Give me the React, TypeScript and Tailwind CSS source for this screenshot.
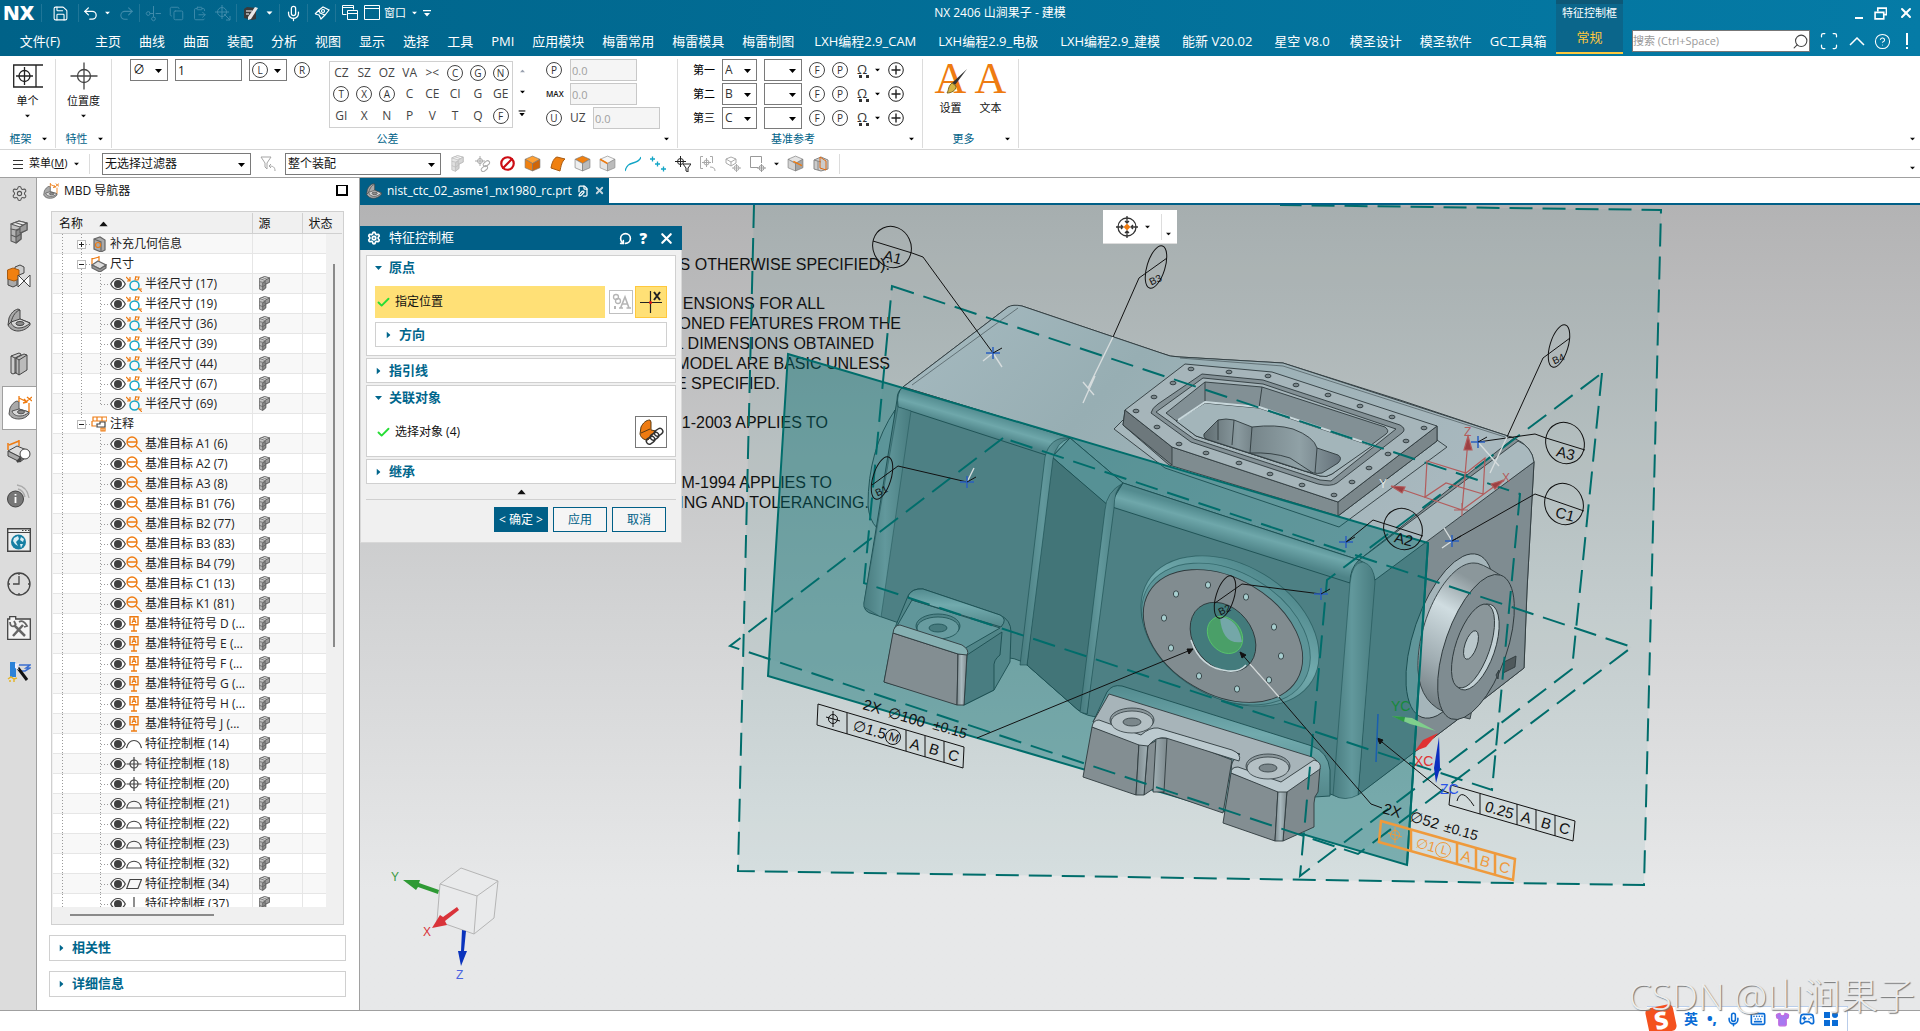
import React from "react";
import {
    Mic,
    Scissors,
    Undo2,
    Redo2,
    Save,
    Copy,
    ClipboardPaste,
    Search,
    HelpCircle,
    ChevronUp,
    X,
    Check,
    Settings,
    RotateCcw,
    FilePen,
    Ban,
    Scan,
    Keyboard,
    Gamepad2,
    Shirt,
} from "lucide-react";

const TABS = [
    "主页", "曲线", "曲面", "装配", "分析", "视图", "显示", "选择", "工具", "PMI",
    "应用模块", "梅雷常用", "梅雷模具", "梅雷制图", "LXH编程2.9_CAM", "LXH编程2.9_电极",
    "LXH编程2.9_建模", "能新 V20.02", "星空 V8.0", "模圣设计", "模圣软件", "GC工具箱",
];

const SYMBOLS = [
    "CZ", "SZ", "OZ", "VA", "><", "(C)", "(G)", "(N)",
    "(T)", "(X)", "(A)", "C", "CE", "CI", "G", "GE",
    "GI", "X", "N", "P", "V", "T", "Q", "(F)",
];

type NodeKind = "extra" | "dims" | "notes" | "radius" | "target" | "datum" | "arc" | "position" | "profile" | "flat" | "line";

type TreeNode = {
    label: string;
    kind: NodeKind;
    group?: "open" | "closed";
    last?: boolean;
    under?: "dims" | "notes";
};

const child = (kind: NodeKind, label: string, under: "dims" | "notes" = "notes"): TreeNode => ({ kind, label, under });

const TREE: TreeNode[] = [
    { label: "补充几何信息", kind: "extra", group: "closed" },
    { label: "尺寸", kind: "dims", group: "open" },
    ...[17, 19, 36, 39, 44, 67].map((n) => child("radius", `半径尺寸 (${n})`, "dims")),
    { label: "半径尺寸 (69)", kind: "radius", under: "dims", last: true },
    { label: "注释", kind: "notes", group: "open" },
    ...["A1 (6)", "A2 (7)", "A3 (8)", "B1 (76)", "B2 (77)", "B3 (83)", "B4 (79)", "C1 (13)", "K1 (81)"].map((n) =>
        child("target", `基准目标 ${n}`)
    ),
    ...["D", "E", "F", "G", "H", "J"].map((n) => child("datum", `基准特征符号 ${n} (...`)),
    child("arc", "特征控制框 (14)"),
    child("position", "特征控制框 (18)"),
    child("position", "特征控制框 (20)"),
    ...[21, 22, 23, 32].map((n) => child("profile", `特征控制框 (${n})`)),
    child("flat", "特征控制框 (34)"),
    child("line", "特征控制框 (37)"),
];

function Caret({ className = "" }: { className?: string }) {
    return (
        <svg viewBox="0 0 7 4" className={`w-[7px] h-[4px] shrink-0 ${className}`} fill="currentColor">
            <path d="M0 0h7L3.5 4z" />
        </svg>
    );
}

function BarCaret({ className = "" }: { className?: string }) {
    return (
        <svg viewBox="0 0 8 7" className={`w-[8px] h-[7px] shrink-0 ${className}`} fill="currentColor">
            <path d="M0 0h8v1.200H0zM1 3h6L4 6.500z" />
        </svg>
    );
}

function Combo({ label, value, className }: { label: string; value: string; className: string }) {
    return (
        <div className={`relative h-[22px] border border-[#7a7a7a] bg-white ${className}`}>
            <select aria-label={label} className="appearance-none w-full h-full px-[2px] text-[12px] leading-[20px] bg-transparent outline-none">
                <option>{value}</option>
            </select>
            <Caret className="absolute right-[5px] top-[9px] pointer-events-none text-black" />
        </div>
    );
}

function Circled({ children }: { children: React.ReactNode }) {
    return (
        <span className="inline-flex items-center justify-center w-[16px] h-[16px] rounded-full border border-[#444] text-[10px] leading-none text-[#333]">
            {children}
        </span>
    );
}

function PartIcon({ className = "w-[24px] h-[24px]" }: { className?: string }) {
    return (
        <svg viewBox="0 0 24 24" className={className} stroke="#5a5a5a" strokeWidth="1.100" strokeLinejoin="round">
            <path d="M4 9l5-3 5 2v11l-5 4-5-2z" fill="#b4b4b4" />
            <path d="M9 11l5-3v11l-5 4z" fill="#8c8c8c" />
            <path d="M4 15l5 2 5-3" fill="none" />
            <path d="M4 4l8-3 8 2v7l-6 3V8L9 10 4 9z" fill="#c4c4c4" />
            <path d="M4 4l8-3 8 2-7 4z" fill="#ececec" />
            <path d="M13 7l7-4v7l-7 3z" fill="#9c9c9c" />
            <path d="M8 2.500l8 2.500" fill="none" />
        </svg>
    );
}

function Bracket({ color = "#a9a9a9", className = "w-[24px] h-[24px]" }: { color?: string; className?: string }) {
    return (
        <svg viewBox="0 0 24 24" className={className} stroke="#444" strokeWidth="1" strokeLinejoin="round">
            <path d="M1 17L2 10C4 5 7 2 11 1l2 1v9l10 4v2c-2 3-7 6-12 6-4 0-8-2-10-6z" fill={color} />
            <path d="M13 2C9 3 6 7 4 14l-3 3" fill="none" />
            <path d="M4 14l9-3 10 4c-3 3-7 5-11 5s-7-2-8-6z" fill="#d6d6d6" />
            <ellipse cx="13" cy="15.500" rx="4" ry="2" fill="#8c8c8c" />
        </svg>
    );
}

function MbdIcon({ className = "w-[24px] h-[24px]" }: { className?: string }) {
    return (
        <svg viewBox="0 0 24 24" className={className} stroke="#555" strokeWidth="1" strokeLinejoin="round">
            <path d="M1 18l1-6c2-4 4-6 7-7l2 1v7l10 3v2c-2 3-6 5-10 5s-8-1-10-5z" fill="#a9a9a9" />
            <path d="M4 15l7-2 10 3c-3 3-6 4-9 4s-7-1-8-5z" fill="#dadada" />
            <ellipse cx="13" cy="16" rx="3.500" ry="1.800" fill="#888" />
            <path d="M11 0v6M11 2l8 4M16 3l3 3-4 1M21 7v9M19 1l5 4M24 1l-5 4" stroke="#ee7b11" strokeWidth="1.300" fill="none" />
        </svg>
    );
}

function Cube({ top, left, right, slash }: { top: string; left: string; right: string; slash?: boolean }) {
    return (
        <svg viewBox="0 0 16 16" className="w-[17px] h-[17px]" stroke="#777" strokeWidth="0.600" strokeLinejoin="round">
            <path d="M8 1l7 3-7 4-7-4z" fill={top} />
            <path d="M1 4l7 4v7l-7-3z" fill={left} />
            <path d="M15 4L8 8v7l7-3z" fill={right} />
            {slash && <path d="M6 6l8 4" stroke="#ee7b11" strokeWidth="1.500" />}
        </svg>
    );
}

function PositionIcon({ className, stroke = "#444" }: { className: string; stroke?: string }) {
    return (
        <svg viewBox="0 0 28 28" className={className} fill="none" stroke={stroke} strokeWidth="1.300">
            <circle cx="14" cy="14" r="6.500" />
            <path d="M0.500 14h27M14 0.500v27" />
        </svg>
    );
}

function NodeIcon({ kind }: { kind: NodeKind }) {
    const o = "#ee7b11";
    return (
        <svg viewBox="0 0 16 16" className="w-[16px] h-[16px] shrink-0" fill="none" stroke="#444" strokeWidth="1.200">
            {kind === "extra" && (
                <>
                    <path d="M3 3l6-2 5 3v10l-4 2-7-3z" fill="#aaa" stroke="#666" />
                    <path d="M3 3l7 3v10" stroke="#666" />
                    <circle cx="7" cy="9" r="2.500" stroke={o} />
                </>
            )}
            {kind === "dims" && (
                <>
                    <path d="M1 9l6-4 8 4-6 4z" fill="#ddd" stroke="#666" />
                    <path d="M1 9v3l8 4 6-4V9l-6 4z" fill="#999" stroke="#666" />
                    <path d="M1 8V2M8 5V0M1 3l7-2" stroke={o} />
                </>
            )}
            {kind === "notes" && (
                <>
                    <path d="M2 1h14v4H2zM6 1v4M11 1v4M1 5v5h4M10 12h4v3h-4zM12 12v3" stroke={o} />
                    <path d="M6 11V8h3V6h5v5z" />
                </>
            )}
            {kind === "radius" && (
                <>
                    <circle cx="8.500" cy="9.500" r="4.500" stroke="#12a5c6" strokeWidth="1.500" />
                    <path d="M0 1l4 4M4 1v4H1M9 4l1-4M10 1h3l-1 3H9M12 12l4 4M13 13h3" stroke={o} />
                </>
            )}
            {kind === "target" && (
                <path d="M1 6a5 5 0 1 0 10 0a5 5 0 1 0-10 0zM1 6h10M9.500 9.500L16 16" stroke={o} strokeWidth="1.400" />
            )}
            {kind === "datum" && (
                <>
                    <path d="M4 0.700h8v8H4zM8 9v6M5 15h6" stroke={o} strokeWidth="1.400" />
                    <path d="M6 7l2-5 2 5M7 5.500h2" stroke={o} />
                </>
            )}
            {kind === "arc" && <path d="M0.500 12C3 2 13 2 15.500 12" />}
            {kind === "position" && (
                <>
                    <circle cx="8" cy="8" r="4" />
                    <path d="M0.500 8h15M8 1v14" />
                </>
            )}
            {kind === "profile" && <path d="M0.700 12C2 3 14 3 15.300 12z" />}
            {kind === "flat" && <path d="M4 3.500h11.500L12 12.500H0.700z" />}
            {kind === "line" && <path d="M8 1v14" />}
        </svg>
    );
}

function TreeLines({ node }: { node: TreeNode }) {
    const dots = { stroke: "#9a9a9a", strokeDasharray: "1 2", fill: "none" };
    if (node.group) {
        return (
            <svg viewBox="0 0 38 20" className="w-[38px] h-[20px] shrink-0">
                <path d={`M9.500 0v20M28.500 0v6M33 10.500h6${node.kind === "notes" ? "" : "M28.500 15v5"}`} {...dots} />
                <rect x="24.500" y="6.500" width="8" height="8" fill="#fff" stroke="#bbb" />
                <path d={node.group === "closed" ? "M26 10.500h5M28.500 8v5" : "M26 10.500h5"} stroke="#222" />
            </svg>
        );
    }
    return (
        <svg viewBox="0 0 57 20" className="w-[57px] h-[20px] shrink-0">
            <path
                d={`M9.500 0v20M47.500 0v${node.last ? 10 : 20}M48 10.500h9${node.under === "dims" ? "M28.500 0v20" : ""}`}
                {...dots}
            />
        </svg>
    );
}

function Eye() {
    return (
        <svg viewBox="0 0 16 14" className="w-[16px] h-[14px] shrink-0">
            <path d="M0.700 7C3 2.500 5.500 1.500 8 1.500S13 2.500 15.300 7C13 11.500 10.500 12.500 8 12.500S3 11.500 0.700 7z" fill="#fff" stroke="#444" strokeWidth="1.200" />
            <circle cx="8" cy="7" r="4" fill="#3f3f3f" />
        </svg>
    );
}

function BarDivider() {
    return <div className="w-px h-[18px] mx-[2px] bg-[#1f7698]" />;
}

function TitleBar() {
    const slot = "flex w-[23px] shrink-0 justify-center";
    return (
        <header className="flex h-[56px] shrink-0 bg-gradient-to-r from-[#006288] to-[#057ba6] text-white">
            <div className="flex-1 min-w-0">
                <div className="flex h-[26px] items-center">
                    <div className="flex w-[444px] shrink-0 items-center">
                        <span className="w-[39px] pl-[3px] text-[20px] leading-[24px] font-extrabold">NX</span>
                        <BarDivider />
                        <button aria-label="保存" className="flex w-[32px] justify-center"><Save size={17} strokeWidth={1.5} /></button>
                        <BarDivider />
                        <button aria-label="撤销" className="flex w-[18px] justify-center"><Undo2 size={17} strokeWidth={1.8} /></button>
                        <Caret className="mx-[5px] scale-75" />
                        <button aria-label="重做" className="flex w-[21px] justify-center text-[#3f8bab]"><Redo2 size={17} strokeWidth={1.5} /></button>
                        <BarDivider />
                        <button aria-label="剪切" className={`${slot} text-[#3f8bab]`}><Scissors size={15} strokeWidth={1.5} className="-rotate-45" /></button>
                        <button aria-label="复制" className={`${slot} text-[#3f8bab]`}><Copy size={15} strokeWidth={1.5} /></button>
                        <button aria-label="粘贴" className={`${slot} text-[#3f8bab]`}><ClipboardPaste size={15} strokeWidth={1.5} /></button>
                        <button aria-label="移动" className={`${slot} text-[#3f8bab]`}>
                            <svg viewBox="0 0 16 16" className="w-[16px] h-[16px]" fill="none" stroke="currentColor">
                                <circle cx="7" cy="7" r="4.500" />
                                <path d="M0 7h14M7 0v14M9 9l6 6M15 11v4h-4" />
                            </svg>
                        </button>
                        <BarDivider />
                        <button aria-label="重复命令" className={slot}>
                            <svg viewBox="0 0 16 16" className="w-[16px] h-[16px]">
                                <path d="M1 4l3-2 9 1v11L9 15l-8-2z" fill="#3a3a3a" />
                                <path d="M3 6h6M3 9h3" stroke="#fff" />
                                <path d="M15 3L8 14l-3 1v-3L12 2z" fill="#e8e8e8" />
                            </svg>
                        </button>
                        <Caret className="mx-[4px] scale-90" />
                        <BarDivider />
                        <button aria-label="语音" className={slot}><Mic size={17} strokeWidth={1.8} /></button>
                        <BarDivider />
                        <button aria-label="触控" className={slot}>
                            <svg viewBox="0 0 16 14" className="w-[16px] h-[14px]" fill="none" stroke="#fff" strokeWidth="1.200">
                                <path d="M5 4l4-3 6 3-4 5-5-2zM1 8l4 1 2 4 4-4M5 4L1 8" />
                                <circle cx="9" cy="5" r="1.500" />
                            </svg>
                        </button>
                        <BarDivider />
                        <button aria-label="切换窗口" className={slot}>
                            <svg viewBox="0 0 16 16" className="w-[16px] h-[16px]" fill="none" stroke="#fff">
                                <path d="M4.500 9.500h-4v-9h11v4M0.500 2.500h11M5.500 5.500h10v9h-10zM5.500 8.500h10" />
                            </svg>
                        </button>
                        <button className="flex items-center gap-[4px] pl-[3px] text-[11px] whitespace-nowrap">
                            <svg viewBox="0 0 16 16" className="w-[16px] h-[16px]" fill="none" stroke="#fff">
                                <path d="M0.500 0.500h15v14h-15zM0.500 3.500h15" />
                            </svg>
                            窗口
                        </button>
                        <Caret className="ml-[5px] scale-75" />
                        <BarCaret className="ml-[5px]" />
                    </div>
                    <h1 className="flex-1 text-center text-[12px] leading-[20px]">NX 2406 山涧果子 - 建模</h1>
                </div>
                <nav className="flex h-[29px] text-[13px] leading-[28px] whitespace-nowrap">
                    <button className="w-[86px] shrink-0 pr-[6px]">文件(F)</button>
                    {TABS.map((tab) => (
                        <button key={tab} className={`shrink-0 ${/\d/.test(tab) ? "px-[11px]" : "px-[9px]"}`}>{tab}</button>
                    ))}
                </nav>
            </div>
            <div className="w-[67px] h-[54px] shrink-0 bg-[#0b668b] border-t-4 border-t-[#0d5877] border-b-2 border-b-[#ffc83d] text-center">
                <div className="text-[11px] leading-[18px]">特征控制框</div>
                <button className="text-[13px] leading-[30px] text-[#ffc83d]">常规</button>
            </div>
            <div className="w-[297px] shrink-0 pl-[9px] pr-[6px]">
                <div className="flex h-[29px] items-center justify-end gap-[11px] pb-[3px]">
                    <button aria-label="最小化" className="w-[8px] h-[2px] mt-[9px] bg-white" />
                    <button aria-label="还原">
                        <svg viewBox="0 0 12 12" className="w-[13px] h-[13px]" fill="none" stroke="#fff" strokeWidth="1.500">
                            <path d="M3.500 4V1h8v6H9M1 5h8v6H1z" />
                        </svg>
                    </button>
                    <button aria-label="关闭"><X size={16} strokeWidth={3} /></button>
                </div>
                <div className="flex items-center justify-between pt-px">
                    <div className="flex w-[178px] h-[22px] items-center bg-white border border-[#777]">
                        <input aria-label="搜索" placeholder="搜索 (Ctrl+Space)" className="w-full min-w-0 text-[11px] leading-[20px] text-black placeholder:text-[#999] outline-none" />
                        <Search size={17} strokeWidth={1.5} className="shrink-0 -scale-x-100 text-[#444]" />
                    </div>
                    <button aria-label="全屏"><Scan size={20} strokeWidth={1.5} /></button>
                    <button aria-label="最小化功能区">
                        <svg viewBox="0 0 16 9" className="w-[16px] h-[9px]" fill="none" stroke="#fff" strokeWidth="1.500"><path d="M1 8l7-7 7 7" /></svg>
                    </button>
                    <button aria-label="帮助"><HelpCircle size={17} strokeWidth={1.5} /></button>
                    <button aria-label="信息" className="w-[14px]">
                        <svg viewBox="0 0 4 16" className="w-[4px] h-[16px] mx-auto" stroke="#fff" strokeWidth="2">
                            <path d="M2 0v12M2 14v2" />
                        </svg>
                    </button>
                </div>
            </div>
        </header>
    );
}

function GroupLabel({ children, className = "" }: { children: React.ReactNode; className?: string }) {
    return (
        <div className={`flex h-[18px] items-center text-[11px] leading-[18px] text-[#006288] ${className}`}>
            <span className="flex-1 text-center">{children}</span>
            <Caret className="text-black scale-75 mr-[7px]" />
        </div>
    );
}

function DatumRow({ label, value }: { label: string; value: string }) {
    return (
        <div className="flex h-[22px] items-center text-[#333]">
            <span className="w-[29px] text-[11px] text-black">{label}</span>
            <Combo label={`${label}基准`} value={value} className="w-[35px] mr-[7px]" />
            <Combo label={`${label}修饰符`} value="" className="w-[38px] mr-[7px]" />
            <div className="flex items-center gap-[7px]">
                <Circled>F</Circled>
                <Circled>P</Circled>
                <button aria-label="更多符号" className="flex items-center gap-[5px]">
                    <span className="flex flex-col w-[14px] text-[13px] leading-[12px]">
                        Ω
                        <i className="h-[3px] ml-[4px] border-b-3 border-dotted border-[#333]" />
                    </span>
                    <Caret className="scale-75 text-black" />
                </button>
                <button aria-label="复合基准">
                    <svg viewBox="0 0 16 16" className="w-[16px] h-[16px]" fill="none" stroke="#222">
                        <circle cx="8" cy="8" r="7.300" />
                        <path d="M3.500 8h9M8 3.500v9" strokeWidth="1.400" />
                    </svg>
                </button>
            </div>
        </div>
    );
}

function Ribbon() {
    const field = "w-[67px] h-[22px] px-px border border-[#c8c8c8] bg-[#f5f5f5] text-[#a0a0a0]";
    return (
        <section className="flex h-[94px] shrink-0 pt-[3px] pb-px bg-white border-b border-[#d5d5d5] text-[11px]">
            <div className="flex w-[56px] flex-col items-center border-r border-[#dcdcdc]">
                <button className="flex flex-1 w-full flex-col items-center pt-[5px]">
                    <svg viewBox="0 0 30 24" className="w-[30px] h-[24px]" fill="none" stroke="#222" strokeWidth="1.300">
                        <path d="M30 1H0.700v22H30M23 1v22" />
                        <circle cx="11.500" cy="12" r="5.500" />
                        <path d="M3 12h17M11.500 3v18" />
                    </svg>
                    <span className="mt-[4px] leading-[18px]">单个</span>
                    <Caret className="mt-[4px] scale-75" />
                </button>
                <GroupLabel className="w-full">框架</GroupLabel>
            </div>
            <div className="flex w-[56px] flex-col items-center border-r border-[#dcdcdc]">
                <button className="flex flex-1 w-full flex-col items-center pt-[3px]">
                    <PositionIcon className="w-[28px] h-[28px]" />
                    <span className="mt-[2px] leading-[18px]">位置度</span>
                    <Caret className="mt-[4px] scale-75" />
                </button>
                <GroupLabel className="w-full">特性</GroupLabel>
            </div>
            <div className="flex w-[566px] flex-col border-r border-[#dcdcdc]">
                <div className="flex flex-1 pl-[18px]">
                    <div className="flex h-[22px] w-[199px] shrink-0 items-center gap-[7px]">
                        <Combo label="区域形状" value="∅" className="w-[38px]" />
                        <input aria-label="公差值" defaultValue="1" className="w-[67px] h-[22px] px-[2px] border border-[#7a7a7a] text-[12px]" />
                        <div className="relative w-[38px] h-[22px]">
                            <Combo label="公差修饰符" value="" className="w-[38px]" />
                            <span className="absolute left-[3px] top-[3px] flex pointer-events-none"><Circled>L</Circled></span>
                        </div>
                        <Circled>R</Circled>
                    </div>
                    <div className="grid grid-cols-8 w-[184px] h-[67px] mt-[2px] shrink-0 border border-[#d0d0d0] text-[12px] text-[#444]">
                        {SYMBOLS.map((s, i) => (
                            <button key={i} className="flex items-center justify-center leading-none">
                                {s.startsWith("(") ? <Circled>{s[1]}</Circled> : s}
                            </button>
                        ))}
                    </div>
                    <div className="flex flex-col w-[18px] h-[68px] items-center justify-between py-[10px] text-black">
                        <Caret className="rotate-180 scale-75 text-gray-400" />
                        <Caret className="scale-75" />
                        <BarCaret className="scale-90" />
                    </div>
                    <div className="flex flex-col gap-[2px] pl-[15px]">
                        <label className="flex items-center"><span className="w-[24px]"><Circled>P</Circled></span><input defaultValue="0.0" disabled className={field} /></label>
                        <label className="flex items-center"><span className="w-[24px] text-[8px] font-semibold">MAX</span><input defaultValue="0.0" disabled className={field} /></label>
                        <label className="flex items-center"><span className="w-[24px]"><Circled>U</Circled></span><span className="w-[23px] text-[12px] text-[#444]">UZ</span><input defaultValue="0.0" disabled className={field} /></label>
                    </div>
                </div>
                <GroupLabel>公差</GroupLabel>
            </div>
            <div className="flex w-[245px] flex-col border-r border-[#dcdcdc]">
                <div className="flex flex-1 flex-col gap-[2px] pl-[15px]">
                    <DatumRow label="第一" value="A" />
                    <DatumRow label="第二" value="B" />
                    <DatumRow label="第三" value="C" />
                </div>
                <GroupLabel>基准参考</GroupLabel>
            </div>
            <div className="flex w-[96px] flex-col border-r border-[#dcdcdc]">
                <div className="flex flex-1 justify-center gap-[8px] leading-[18px]">
                    <button className="flex w-[32px] flex-col items-center">
                        <span className="relative block font-['Liberation_Serif',serif] text-[44px] leading-[40px] text-[#ee7b11]">
                            A
                            <svg viewBox="0 0 22 26" className="absolute left-[11px] top-[10px] w-[22px] h-[26px]">
                                <path d="M21 0L9 16l-3-2z" fill="#333" />
                                <path d="M6 14l4 3c0 5-5 7-9 7 2-3 1-7 5-10z" fill="#d6b544" stroke="#7a6420" />
                            </svg>
                        </span>
                        设置
                    </button>
                    <button className="flex w-[32px] flex-col items-center">
                        <span className="block font-['Liberation_Serif',serif] text-[44px] leading-[40px] text-[#ee7b11]">A</span>
                        文本
                    </button>
                </div>
                <GroupLabel>更多</GroupLabel>
            </div>
            <div className="flex flex-1 items-end justify-end pr-[4px] pb-[7px]"><Caret className="scale-75" /></div>
        </section>
    );
}

function SelectionBar() {
    const tool = "flex w-[25px] justify-center";
    return (
        <section className="flex h-[28px] shrink-0 items-center bg-white border-b border-[#a0a0a0] text-[12px]">
            <button className="flex w-[90px] h-[20px] items-center gap-[6px] pl-[13px] border-r border-[#dcdcdc]">
                <svg viewBox="0 0 10 10" className="w-[10px] h-[10px]" stroke="#333"><path d="M0 1.500h10M0 5.500h10M0 9.500h10" /></svg>
                <span className="text-[11px] whitespace-nowrap">菜单(<u>M</u>)</span>
                <Caret className="scale-75" />
            </button>
            <Combo label="类型过滤器" value="无选择过滤器" className="w-[149px] ml-[12px]" />
            <button aria-label="重置过滤器" className="flex w-[34px] justify-center">
                <svg viewBox="0 0 16 16" className="w-[16px] h-[16px]" fill="none" stroke="#a5a5a5"><path d="M1 1h10L7 7v6l-2-2V7zM15 15c0-4-2-5-6-5M11 8L9 10l2 2" /></svg>
            </button>
            <Combo label="选择范围" value="整个装配" className="w-[156px]" />
            <div className="flex items-center pl-[4px]">
                <button aria-label="部件" className={`${tool} opacity-40`}><PartIcon className="w-[17px] h-[17px]" /></button>
                <button aria-label="链接" className={tool}>
                    <svg viewBox="0 0 16 16" className="w-[16px] h-[16px]" fill="none" stroke="#aaa"><circle cx="5" cy="5" r="2.500" /><path d="M0 5h10M5 0v10" /><rect x="8" y="6" width="7" height="4" rx="2" transform="rotate(-40 11 8)" /><rect x="6" y="11" width="7" height="4" rx="2" transform="rotate(-40 9 13)" /></svg>
                </button>
                <button aria-label="取消选择" className={`${tool} text-[#cc0d14]`}><Ban size={15} strokeWidth={3.5} className="-scale-x-100" /></button>
                <button aria-label="实体" className={tool}><Cube top="#ffa033" left="#f08010" right="#cf6508" /></button>
                <button aria-label="片体" className={tool}>
                    <svg viewBox="0 0 16 16" className="w-[16px] h-[16px]"><path d="M1 12C2 6 4 2 7 1l8 2c-3 2-4 7-5 12z" fill="#f08010" stroke="#a85a10" /></svg>
                </button>
                <button aria-label="面" className={tool}><Cube top="#f08010" left="#eee" right="#bbb" /></button>
                <button aria-label="边" className={tool}>
                    <svg viewBox="0 0 16 16" className="w-[17px] h-[17px]" stroke="#888" strokeWidth="0.600" strokeLinejoin="round">
                        <path d="M8 1l7 3-7 4-7-4z" fill="#f6f6f6" />
                        <path d="M1 4l7 4v7l-7-3z" fill="#e4e4e4" />
                        <path d="M15 4L8 8v7l7-3z" fill="#bbb" />
                        <path d="M1 4l7 4" stroke="#ee7b11" strokeWidth="1.500" />
                    </svg>
                </button>
                <button aria-label="曲线" className={tool}>
                    <svg viewBox="0 0 16 16" className="w-[16px] h-[16px]" fill="none" stroke="#12a5c6" strokeWidth="1.300"><path d="M0 15C2 9 4 8 8 7s7-2 8-6" /></svg>
                </button>
                <button aria-label="点" className={tool}>
                    <svg viewBox="0 0 16 16" className="w-[16px] h-[16px]" stroke="#12a5c6" strokeWidth="1.300"><path d="M0 3h5M2.500 0.500v5M5 8h5M7.500 5.500v5M11 13h5M13.500 10.500v5" /></svg>
                </button>
                <button aria-label="过滤" className={tool}>
                    <svg viewBox="0 0 16 16" className="w-[16px] h-[16px]" fill="none" stroke="#222"><circle cx="5.500" cy="5.500" r="3" /><path d="M0 5.500h11M5.500 0v11M8 8h8l-3 4v4l-2-1v-3z" /></svg>
                </button>
                <button aria-label="重置" className={tool}>
                    <svg viewBox="0 0 16 16" className="w-[16px] h-[16px]" fill="none" stroke="#aaa"><path d="M3 0.500H0.500v12H3M10 0.500h2.500V7M2 6.500h9M6.500 2v9M15 15c0-3-2-4-5-4" /><circle cx="6.500" cy="6.500" r="2.500" /></svg>
                </button>
                <button aria-label="关联" className={tool}>
                    <svg viewBox="0 0 16 16" className="w-[16px] h-[16px]" fill="none" stroke="#aaa"><path d="M6 1l5 2v4L6 10 1 7V3zM1 3l5 3 5-3M6 6v4M7 12h9M11.500 8v8" /><circle cx="11.500" cy="12" r="2.500" /></svg>
                </button>
                <button aria-label="矩形" className={tool}>
                    <svg viewBox="0 0 16 16" className="w-[16px] h-[16px]" fill="none" stroke="#999"><path d="M8 11.500H0.500v-11h11V7M7 12h9M11.500 8v8" /><circle cx="11.500" cy="12" r="2.500" /></svg>
                </button>
                <Caret className="mx-[3px] scale-75" />
                <button aria-label="着色" className={tool}><Cube top="#e4e4e4" left="#d2d2d2" right="#a5a5a5" slash /></button>
                <button aria-label="剖切" className={tool}>
                    <svg viewBox="0 0 16 16" className="w-[16px] h-[16px]" fill="#ccc" stroke="#888"><path d="M1 4l7-3 7 3v9l-7 2-7-2z" /><path d="M5 5v9M1 4l7 2" /><path d="M7 1l6 4v9l-6-2z" fill="none" stroke="#e06a10" /></svg>
                </button>
                <div className="w-px h-[20px] ml-[6px] bg-[#dcdcdc]" />
            </div>
            <Caret className="ml-auto mr-[4px] scale-75 mt-[8px]" />
        </section>
    );
}

function IconStrip() {
    const item = "flex h-[44px] w-[34px] items-center justify-center";
    return (
        <aside className="flex w-[37px] shrink-0 flex-col items-end bg-[#dcdcdc] border-r border-[#a0a0a0]">
            <button aria-label="设置" className="flex h-[31px] w-[34px] items-center justify-center text-[#555]"><Settings size={17} strokeWidth={1.5} /></button>
            <button aria-label="装配导航器" className={`${item} mt-px`}><PartIcon /></button>
            <button aria-label="约束导航器" className={item}>
                <svg viewBox="0 0 24 24" className="w-[24px] h-[24px]" stroke="#444">
                    <path d="M8 3l5-2 4 2v6l-5 2-4-2z" fill="#ccc" />
                    <path d="M1 15h9v6l-4 2-5-2z" fill="#aaa" />
                    <path d="M0.500 6L6 4l6 2v9l-5 2-6.500-2z" fill="#f08010" stroke="#a85a10" />
                    <path d="M11 11l6 6-6 6zM23 11l-6 6 6 6z" fill="#fff" />
                </svg>
            </button>
            <button aria-label="部件导航器" className={item}><Bracket /></button>
            <button aria-label="重用库" className={item}>
                <svg viewBox="0 0 24 24" className="w-[24px] h-[24px]" stroke="#444">
                    <path d="M4 4l8-3 2 1v16l-8 4-2-1zM4 4l4 2v16M8 6l6-3" fill="#ccc" />
                    <path d="M9 6l8-4 3 1v15l-8 5-3-2z" fill="#bbb" />
                    <path d="M9 6l3 2v15M12 8l8-5" fill="none" />
                </svg>
            </button>
            <button aria-label="MBD 导航器" className="flex h-[44px] w-[34px] items-center justify-center bg-white border border-r-0 border-[#a0a0a0]"><MbdIcon /></button>
            <button aria-label="MBD 查询" className={item}>
                <svg viewBox="0 0 24 24" className="w-[24px] h-[24px]" stroke="#444">
                    <path d="M1 11l9-5 12 5-9 6z" fill="#ddd" />
                    <path d="M1 11v5l12 6v-5z" fill="#aaa" />
                    <path d="M13 17l9-6v4l-9 7z" fill="#888" />
                    <path d="M1 10V3M12 6V0M2 5l10-4" stroke="#ee7b11" strokeWidth="1.500" fill="none" />
                    <circle cx="18" cy="14" r="5" fill="#fff" />
                    <path d="M14 18l-4 4" strokeWidth="2.500" />
                </svg>
            </button>
            <button aria-label="信息" className={item}>
                <svg viewBox="0 0 24 24" className="w-[24px] h-[24px]">
                    <circle cx="8.500" cy="15" r="8" fill="#777" stroke="#444" />
                    <path d="M8.500 10v1.500M8.500 13v6" stroke="#fff" strokeWidth="1.800" />
                    <path d="M11 5c4 1 6 4 7 8M10 1c7 1 11 6 12 13" fill="none" stroke="#aaa" strokeWidth="1.300" />
                </svg>
            </button>
            <button aria-label="浏览器" className={item}>
                <svg viewBox="0 0 24 24" className="w-[24px] h-[24px]">
                    <path d="M0.700 0.700h22.600v22.600H0.700z" fill="#eee" stroke="#444" strokeWidth="1.400" />
                    <path d="M1 4.500h22M15 2.500h1.500M18 2.500h1.500M21 2.500h1.500" stroke="#444" />
                    <circle cx="11.500" cy="14" r="7.500" fill="#177fa3" />
                    <path d="M7 10l4-2 1 3-3 3 2 4-3-2-2-3zM14 9l3 2-1 3-3-2zM13 16l3 0-2 4z" fill="#d9eef5" />
                </svg>
            </button>
            <button aria-label="历史" className={item}>
                <svg viewBox="0 0 24 24" className="w-[24px] h-[24px]" fill="none" stroke="#444" strokeWidth="1.300">
                    <circle cx="12" cy="12" r="11" />
                    <path d="M12 4v8H6M12 1v2M12 21v2M1 12h2M21 12h2" />
                </svg>
            </button>
            <button aria-label="工具" className={item}>
                <svg viewBox="0 0 24 24" className="w-[24px] h-[24px]" fill="none" stroke="#444">
                    <path d="M0.700 3h2V0.700h6V3h14.600v20.300H0.700z" fill="#f4f4f4" strokeWidth="1.300" />
                    <path d="M7 9l11 11M16 9L6 20" strokeWidth="2.500" stroke="#666" />
                    <path d="M3 6c0 4 2 5 5 4M7 5l2 4M12 6c3-2 6 0 8 4l-3 1" strokeWidth="1.800" stroke="#666" />
                </svg>
            </button>
            <button aria-label="向导" className={item}>
                <svg viewBox="0 0 24 24" className="w-[24px] h-[24px]">
                    <path d="M3 2h6v15H3z" fill="#2c82d8" />
                    <path d="M12 5h11l-4 3h4l-5 3h-5" fill="none" stroke="#3b6fd0" strokeWidth="1.500" />
                    <path d="M11 8l9 12" stroke="#111" strokeWidth="3" />
                    <path d="M8 0l1 4 4-1-3 3 2 4-4-2" fill="#eef" />
                    <path d="M1 19l3-2 3 2 3-1M3 20v2M7 19v3" stroke="#e4b52c" strokeWidth="1.500" fill="none" />
                </svg>
            </button>
        </aside>
    );
}

function Navigator() {
    return (
        <section className="flex w-[323px] shrink-0 flex-col bg-white border-r border-[#a0a0a0] pb-[13px]">
            <div className="flex h-[33px] shrink-0 items-center pl-[6px] pr-[11px] pb-[8px] text-[12px]">
                <MbdIcon className="w-[16px] h-[16px]" />
                <h2 className="pl-[5px]">MBD 导航器</h2>
                <button aria-label="最大化" className="ml-auto w-[12px] h-[11px] border-2 border-t-1 border-black" />
            </div>
            <div className="relative flex flex-1 min-h-0 flex-col ml-[14px] mr-[15px] border border-[#d0d0d0] px-px pt-px bg-[#f0f0f0]">
                <div className="flex-1 min-h-0 overflow-hidden">
                    <table className="w-full table-fixed border-collapse text-[12px] whitespace-nowrap">
                        <thead>
                            <tr className="h-[20px] bg-[#f0f0f0] text-left border-b border-[#d0d0d0]">
                                <th className="w-[199px] p-0 pt-px pl-[6px] font-normal border-r border-[#d0d0d0]">
                                    <span className="flex items-center gap-[17px] leading-[19px]">名称<Caret className="rotate-180 scale-125" /></span>
                                </th>
                                <th className="w-[50px] p-0 pt-px pl-[6px] font-normal border-r border-[#d0d0d0] leading-[19px]">源</th>
                                <th className="p-0 pt-px pl-[6px] font-normal leading-[19px]">状态</th>
                            </tr>
                        </thead>
                        <tbody>
                            {TREE.map((node, i) => (
                                <tr key={i} className="h-[20px] border-b border-[#e6e6e6] odd:bg-[#f8f8f8] even:bg-white text-[#222]">
                                    <td className="p-0 border-r border-[#e6e6e6]">
                                        <div className="flex h-[19px] items-center">
                                            <TreeLines node={node} />
                                            {!node.group && <Eye />}
                                            <NodeIcon kind={node.kind} />
                                            <span className="pl-[3px] leading-[19px]">{node.label}</span>
                                        </div>
                                    </td>
                                    <td className="p-0 pl-[4px] border-r border-[#e6e6e6]">
                                        {!node.group && <PartIcon className="block w-[15px] h-[15px]" />}
                                    </td>
                                    <td className="p-0" />
                                </tr>
                            ))}
                        </tbody>
                    </table>
                </div>
                <div className="h-[17px] shrink-0 pt-[7px] pl-[17px] bg-[#f0f0f0]"><div className="w-[144px] h-[2px] bg-[#8a8a8a]" /></div>
                <div className="absolute top-[22px] bottom-0 right-0 w-[17px] bg-[#f0f0f0] pl-[7px] pt-[30px]"><div className="w-[2px] h-[383px] bg-[#8a8a8a]" /></div>
            </div>
            {["相关性", "详细信息"].map((t) => (
                <button key={t} className="flex h-[26px] shrink-0 items-center gap-[7px] mt-[10px] ml-[12px] mr-[13px] pl-[8px] border border-[#d0d0d0] text-[13px] font-bold text-[#00668c]">
                    <Caret className="-rotate-90" />
                    {t}
                </button>
            ))}
        </section>
    );
}

function SectionHead({ title, open }: { title: string; open?: boolean }) {
    return (
        <button className="flex h-[23px] items-center gap-[7px] pl-[8px] text-[13px] font-bold text-[#00668c]">
            <Caret className={open ? "" : "-rotate-90"} />
            {title}
        </button>
    );
}

function FeatureDialog() {
    return (
        <div role="dialog" aria-label="特征控制框" className="absolute left-0 top-[21px] w-[322px] bg-[#f0f0f0] border border-[#d8d8d8] border-t-0 text-[12px]">
            <div className="flex h-[24px] items-center bg-[#005f87] px-[7px] text-white text-[13px] -mx-px">
                <Settings size={14} strokeWidth={3} />
                <span className="pl-[8px]">特征控制框</span>
                <div className="ml-auto flex items-center gap-[7px]">
                    <button aria-label="重置"><RotateCcw size={13} strokeWidth={3} className="-rotate-90" /></button>
                    <button aria-label="帮助" className="text-[15px] leading-none font-extrabold">?</button>
                    <button aria-label="关闭" className="pl-[4px]"><X size={17} strokeWidth={3} /></button>
                </div>
            </div>
            <div className="flex flex-col gap-[2px] px-[5px] pt-[5px]">
                <div className="border border-[#d0d0d0] bg-white pb-[8px]">
                    <SectionHead title="原点" open />
                    <div className="flex items-center pl-[8px] pr-[8px] pt-[7px]">
                        <div className="flex flex-1 h-[32px] items-center gap-[4px] bg-[#ffe076] pl-[1px]">
                            <Check size={15} strokeWidth={3} className="text-[#26dd35]" />
                            指定位置
                        </div>
                        <button aria-label="文本对齐" className="ml-[4px] w-[24px] h-[24px] border border-[#c0c0c0]">
                            <svg viewBox="0 0 22 22" className="w-[22px] h-[22px]" fill="none" stroke="#b5b5b5" strokeWidth="1.300">
                                <circle cx="6" cy="6" r="2.500" />
                                <circle cx="8" cy="10" r="2.500" />
                                <path d="M5 15v3" strokeWidth="2" />
                                <path d="M9 17h4M10.500 17L15 6l4 11M16.500 17H21M12 13h6" strokeWidth="1.600" />
                            </svg>
                        </button>
                        <button aria-label="原点工具" className="ml-[2px] w-[32px] h-[32px] border border-[#ffc83d] bg-[#ffe076]">
                            <svg viewBox="0 0 30 30" className="w-[30px] h-[30px]" stroke="#222" strokeWidth="1.200">
                                <path d="M4 15.500h22M14.500 4v22" />
                                <circle cx="14.500" cy="15.500" r="1.500" fill="#e01010" stroke="none" />
                                <path d="M18 5l6 8M24 5l-6 8" strokeWidth="2" />
                            </svg>
                        </button>
                    </div>
                    <div className="mx-[8px] mt-[4px] border border-[#d0d0d0] pl-px"><SectionHead title="方向" /></div>
                </div>
                <div className="border border-[#d0d0d0] bg-white"><SectionHead title="指引线" /></div>
                <div className="border border-[#d0d0d0] bg-white pb-[8px]">
                    <SectionHead title="关联对象" open />
                    <div className="flex items-center px-[8px] pt-[7px]">
                        <div className="flex flex-1 items-center gap-[4px] pl-[1px]">
                            <Check size={15} strokeWidth={3} className="text-[#26dd35]" />
                            选择对象 (4)
                        </div>
                        <button aria-label="选择对象" className="w-[32px] h-[32px] border border-[#777]">
                            <svg viewBox="0 0 30 30" className="w-[30px] h-[30px]" stroke="#5a3a10">
                                <path d="M4 17l1-7c2-4 5-7 9-7l1 2v8l5 1-8 9c-4 0-7-2-8-6z" fill="#ee7b11" />
                                <path d="M5 16l9-4" />
                                <g fill="none" stroke="#333" strokeWidth="1.400">
                                    <rect x="18" y="12" width="9" height="6" rx="3" transform="rotate(-35 23 15)" />
                                    <rect x="14" y="16" width="9" height="6" rx="3" transform="rotate(-35 19 19)" />
                                    <rect x="10" y="20" width="9" height="6" rx="3" transform="rotate(-35 15 23)" />
                                </g>
                            </svg>
                        </button>
                    </div>
                </div>
                <div className="border border-[#d0d0d0] bg-white"><SectionHead title="继承" /></div>
                <button aria-label="折叠" className="flex h-[11px] items-center justify-center"><Caret className="rotate-180 scale-125" /></button>
                <div className="flex justify-end gap-[5px] border-t border-[#d0d0d0] pt-[7px] pr-[10px] pb-[10px]">
                    <button className="w-[54px] h-[25px] bg-[#005f87] text-white">&lt; 确定 &gt;</button>
                    <button className="w-[54px] h-[25px] border border-[#005f87] bg-[#f5f5f5] text-[#005f87]">应用</button>
                    <button className="w-[54px] h-[25px] border border-[#005f87] bg-[#f5f5f5] text-[#005f87]">取消</button>
                </div>
            </div>
        </div>
    );
}

const NOTES: [string, number, number][] = [
    ["S OTHERWISE SPECIFIED):", 890, 270],
    ["MENSIONS FOR ALL", 825, 309],
    ["IONED FEATURES FROM THE", 901, 329],
    ["L DIMENSIONS OBTAINED", 874, 349],
    ["MODEL ARE BASIC UNLESS", 890, 369],
    ["E SPECIFIED.", 780, 389],
    ["41-2003 APPLIES TO", 828, 428],
    ["5M-1994 APPLIES TO", 832, 488],
    ["ING AND TOLERANCING.", 869, 508],
];

const ROUND_TARGETS = [
    { id: "A1", x: 892, y: 247, leader: "M873 241L912 253L923 257L993 353" },
    { id: "A3", x: 1565, y: 443, leader: "M1585 450L1546 438L1535 434L1478 442" },
    { id: "C1", x: 1564, y: 504, leader: "M1584 511L1535 494L1452 541" },
    { id: "A2", x: 1403, y: 529, leader: "M1423 536L1373 520L1346 542" },
];

const SIDE_TARGETS = [
    { id: "B3", x: 1156, y: 267, leader: "M1167 258L1139 278L1113 337" },
    { id: "B4", x: 1559, y: 346, leader: "M1570 338L1543 358L1507 437" },
    { id: "B1", x: 882, y: 478, leader: "M872 485L898 466L967 482" },
    { id: "B2", x: 1225, y: 597, leader: "M1215 603L1242 584L1321 594" },
];

const CROSSES = [[993, 353], [1478, 442], [1452, 541], [1346, 542], [967, 482], [1321, 594]];

const LID_HOLES = [
    [1191, 369], [1229, 372], [1268, 376], [1296, 385], [1328, 395], [1360, 406], [1392, 417], [1424, 428],
    [1406, 441], [1388, 454], [1369, 468], [1352, 482], [1334, 495], [1302, 485], [1270, 474], [1239, 463],
    [1206, 453], [1179, 444], [1157, 427], [1136, 411], [1154, 397], [1173, 383],
];

const FLANGE_HOLES = [
    [1208, 585], [1246, 597], [1274, 627], [1281, 656], [1269, 680], [1237, 689], [1176, 594], [1164, 618], [1171, 648], [1199, 676],
];

function PadHole({ x, y }: { x: number; y: number }) {
    return (
        <g stroke="#2f3a3d" strokeWidth="0.800">
            <ellipse cx={x} cy={y} rx="22" ry="12" fill="#8b979b" />
            <ellipse cx={x} cy={y + 2} rx="21" ry="11" fill="#b4c0c4" />
            <ellipse cx={x} cy={y + 2} rx="9" ry="4" fill="#7b878b" />
        </g>
    );
}

function Model() {
    return (
        <svg viewBox="360 205 1560 805" preserveAspectRatio="xMinYMin slice" className="absolute inset-0 w-full h-full font-['Liberation_Sans',sans-serif]">
            <defs>
                <linearGradient id="top" x1="0" y1="0" x2="1" y2="0.400">
                    <stop offset="0" stopColor="#a6bac0" />
                    <stop offset="0.400" stopColor="#97aeb3" />
                    <stop offset="1" stopColor="#a8b8be" />
                </linearGradient>
                <linearGradient id="roll" x1="0" y1="0" x2="-0.050" y2="1">
                    <stop offset="0" stopColor="#8fa3a8" />
                    <stop offset="0.400" stopColor="#c4d8dc" />
                    <stop offset="1" stopColor="#8b979b" />
                </linearGradient>
                <linearGradient id="edge" gradientUnits="userSpaceOnUse" x1="1240" y1="521" x2="1233" y2="546">
                    <stop offset="0" stopColor="#8fa3a8" />
                    <stop offset="0.400" stopColor="#bfd3d7" />
                    <stop offset="1" stopColor="#86949a" />
                </linearGradient>
                <linearGradient id="edgeLeft" gradientUnits="userSpaceOnUse" x1="985" y1="412" x2="979" y2="433">
                    <stop offset="0" stopColor="#8fa3a8" />
                    <stop offset="0.500" stopColor="#bfd3d7" />
                    <stop offset="1" stopColor="#86949a" />
                </linearGradient>
                <linearGradient id="column" x1="0" y1="0" x2="1" y2="0">
                    <stop offset="0" stopColor="#7d898d" />
                    <stop offset="0.450" stopColor="#a9b9be" />
                    <stop offset="1" stopColor="#7d898d" />
                </linearGradient>
                <linearGradient id="drum" x1="0.300" y1="0" x2="0" y2="1">
                    <stop offset="0" stopColor="#8b979b" />
                    <stop offset="0.250" stopColor="#d0dde1" />
                    <stop offset="0.600" stopColor="#a0adb2" />
                    <stop offset="1" stopColor="#5d686c" />
                </linearGradient>
                <linearGradient id="slot" x1="0" y1="0" x2="1" y2="0">
                    <stop offset="0" stopColor="#5f6c70" />
                    <stop offset="0.250" stopColor="#8a9a9f" />
                    <stop offset="0.350" stopColor="#76858a" />
                    <stop offset="0.700" stopColor="#90a1a6" />
                    <stop offset="1" stopColor="#65727a" />
                </linearGradient>
            </defs>

            <path d="M754 205H1280L1661 210L1644 885L738 871z" fill="#006f70" fillOpacity="0.070" />
            <path d="M892 286L1520 494L1492 790L864 583zM730 646L1003 438L1632 647L1358 854zM1602 373L1572 669L1300 876L1327 580z" fill="#006f70" fillOpacity="0.020" />

            <g fontSize="16" fill="#111">
                {NOTES.map(([text, x, y]) => (
                    <text key={text} x={x} y={y} textAnchor="end">{text}</text>
                ))}
            </g>

            <g stroke="#2f3a3d" strokeWidth="0.900" strokeLinejoin="round">
                <path d="M895 410Q868 450 868 505Q869 520 877 528L890 520z" fill="#9fb3b8" />
                {/* casing */}
                <path
                    d="M903 387Q897 391 897 400L864 603Q863 612 873 614L1000 658Q1015 656 1027 665L1078 710Q1087 717 1100 717L1333 795Q1345 802 1360 793L1457 720L1524 668L1527 590L1534 462Q1532 446 1514 438L1400 400L1283 363L1180 357Q1170 357 1161 353L1022 306Q1013 305 1008 307z"
                    fill="#859094"
                />
                <path d="M1374 578L1534 462L1527 590L1524 668L1457 720L1358 795z" fill="#7f8c91" />
                <path d="M903 387L1008 307Q1013 304 1022 306L1161 353Q1170 357 1180 357L1283 363L1514 438L1359 560L1123 483L1070 438z" fill="url(#top)" />
                <path d="M912 385L1018 308M1180 358L1283 366L1505 437" fill="none" strokeOpacity="0.600" />
                {/* rounded edges */}
                <path d="M903 387L1070 438L1052 457L898 407Q896 392 903 387z" fill="url(#edgeLeft)" />
                <path d="M1070 438L1123 483L1107 505L1052 457z" fill="#95adb2" />
                <path d="M1123 483L1359 560Q1350 568 1350 583L1109 506z" fill="url(#edge)" />
                <path d="M1359 560L1518 441Q1532 447 1534 462L1375 580Q1372 565 1359 560z" fill="#a9b9be" />
                <path d="M1350 583Q1352 562 1363 562Q1374 565 1375 582L1358 795Q1345 802 1333 795z" fill="url(#column)" strokeOpacity="0.600" />
                <path d="M898 407L911 411L881 617L864 607L864 603z" fill="url(#column)" strokeOpacity="0.500" />
                <path d="M1052 457L1109 506L1087 714L1078 710L1027 665L1034 600z" fill="#727d80" />
                <path d="M1045 457L1020 665L1027 665L1053 459Q1056 442 1070 438Q1050 436 1045 457z" fill="url(#column)" strokeOpacity="0.700" />
                <path d="M1105 510L1080 712L1087 714L1114 508Q1114 490 1123 483Q1106 492 1105 510z" fill="url(#column)" strokeOpacity="0.700" />

                {/* cover opening */}
                <path d="M1114 429L1123 420L1437 440L1447 447L1339 527L1165 468z" fill="#a6b7bc" />
                <path d="M1125 410L1172 447L1338 502L1437 426L1437 441L1338 516L1169 465L1123 425z" fill="#7f8c90" />
                <path d="M1172 447V465L1123 425L1125 410z" fill="#6d787c" />
                <path d="M1338 502V516L1437 441V426z" fill="#7b878b" />
                <path d="M1185 364L1272 372L1437 426L1338 502L1172 447L1125 410z" fill="#a6b5ba" />
                <path d="M1202 374L1263 380L1400 425Q1407 429 1402 433L1337 483Q1331 487 1318 484L1191 442L1151 413Q1152 408 1158 404z" fill="#849196" />
                <path d="M1203 378L1263 384L1396 429L1331 481L1320 480L1194 439L1156 412z" fill="#a6b5ba" />
                <path d="M1205 382L1262 387L1385 427Q1390 431 1386 434L1332 474Q1326 478 1320 476L1196 436L1166 413z" fill="#829095" />
                <path d="M1205 403L1259 408L1372 446L1332 474Q1326 478 1320 476L1196 436L1176 421z" fill="#a3b5ba" />
                <path d="M1205 403V382M1259 408L1262 387" fill="none" />
                <path d="M1178 420L1205 402L1259 407L1372 445" fill="none" stroke="#c9d8dc" strokeWidth="2" />
                <path d="M1204 434L1218 420Q1226 418 1234 420L1252 427Q1276 424 1293 429Q1314 437 1317 448L1338 455Q1343 458 1338 463L1322 473Q1314 475 1296 468L1206 439Q1203 437 1204 434z" fill="url(#slot)" />
                <path d="M1252 427L1250 453Q1272 452 1290 458L1313 473M1234 420L1232 445M1218 420L1218 440M1317 448L1315 473" fill="none" />
                {LID_HOLES.map(([x, y], i) => (
                    <ellipse key={i} cx={x} cy={y} rx="3" ry="1.800" fill="#7b878b" />
                ))}

                {/* left foot */}
                <path d="M894 630L908 596Q912 588 923 589L1000 615Q1011 620 1011 632L1010 662L994 690L964 705L884 682z" fill="#8c999d" />
                <path d="M897 626L912 600L1000 628L962 650z" fill="#a6b5ba" />
                <path d="M908 596Q912 588 923 589L1000 615Q1008 619 1001 627L912 600z" fill="url(#roll)" />
                <path d="M967 655L1002 632L1000 655Q993 660 994 668V690L964 705z" fill="#7f8b8f" />
                <PadHole x={938} y={626} />
                {/* ring around the bore */}
                <ellipse cx="1230" cy="631" rx="96" ry="66" transform="rotate(31 1230 631)" fill="url(#roll)" strokeOpacity="0.600" />
                <ellipse cx="1226" cy="634" rx="91" ry="62" transform="rotate(31 1226 634)" fill="#9fb2b7" strokeOpacity="0.600" />
                <path d="M1093 722L1107 692Q1112 684 1122 686L1312 746Q1328 752 1330 770V796L1314 797L1250 790z" fill="url(#roll)" />
                {/* fillet behind the side drum */}
                <ellipse cx="1450" cy="636" rx="86" ry="36" transform="rotate(-71 1450 636)" fill="#a5b5ba" />
            </g>

            {/* section plane */}
            <path d="M788 354L1428 543L1407 865L768 676z" fill="#006c6e" fillOpacity="0.420" stroke="#006d6b" strokeWidth="2" />

            <g stroke="#2f3a3d" strokeWidth="0.900" strokeLinejoin="round">
                <ellipse cx="1223" cy="636" rx="86" ry="58" transform="rotate(30.600 1223 636)" fill="#818c90" />
                <ellipse cx="1223" cy="637" rx="38" ry="29" transform="rotate(51 1223 637)" fill="#437b7c" />
                <path d="M1191 640Q1200 668 1228 671Q1240 672 1246 665" fill="none" stroke="#cbdadd" strokeWidth="1.500" />
                <ellipse cx="1225" cy="635" rx="20" ry="16" transform="rotate(51 1225 635)" fill="#4a9f68" stroke="#57c46a" />
                <path d="M1220 617Q1238 618 1242 642Q1222 645 1220 617z" fill="#74a7a8" stroke="none" />
                {FLANGE_HOLES.map(([x, y], i) => (
                    <ellipse key={i} cx={x} cy={y} rx="2.600" ry="3.200" fill="#a8cfd0" />
                ))}
                {/* left foot front */}
                <path d="M893 633L958 654L957 705L884 682z" fill="#838e92" />
                <path d="M958 654H967L964 705H957z" fill="url(#column)" />
                <path d="M893 633Q894 625 900 625L962 645Q970 650 967 655L958 654z" fill="#86b0b2" />
                {/* front feet */}
                <path d="M1093 722L1109 694L1312 757Q1320 762 1318 765L1283 785L1232 770Q1229 762 1240 754L1166 731Q1155 728 1143 742z" fill="#a7b4b9" />
                <path d="M1092 727L1139 743L1136 795L1083 777z" fill="#838e92" />
                <path d="M1148 745L1167 735L1232 760L1223 813L1153 789L1144 795z" fill="#838e92" />
                <path d="M1139 743H1148L1144 795H1136zM1156 738H1167L1164 792H1153z" fill="url(#column)" />
                <path d="M1092 727Q1093 720 1099 720L1141 735Q1150 727 1158 728L1232 750Q1242 754 1239 761L1166 738Q1156 736 1148 746L1139 745z" fill="#bccacf" />
                <path d="M1231 773L1278 790L1275 841L1223 823z" fill="#838e92" />
                <path d="M1287 791L1320 768L1318 792Q1314 796 1314 803V827L1283 841z" fill="#7f8a8e" />
                <path d="M1278 790H1287L1283 841L1275 841z" fill="url(#column)" />
                <path d="M1231 773Q1231 767 1238 767L1281 782L1314 760Q1322 762 1320 769L1287 792H1278z" fill="#bccacf" />
                <PadHole x={1132} y={720} />
                <PadHole x={1268} y={766} />
                {/* side drum */}
                <path d="M1418 670C1416 620 1448 562 1474 563Q1480 562 1500 575L1470 719L1450 714Q1420 705 1418 670z" fill="url(#drum)" />
                <ellipse cx="1476" cy="647" rx="76" ry="31" transform="rotate(-71 1476 647)" fill="#7f8c91" />
                <ellipse cx="1476" cy="647" rx="45" ry="19" transform="rotate(-71 1476 647)" fill="#c3d1d5" />
                <ellipse cx="1473" cy="646" rx="44" ry="17" transform="rotate(-71 1473 646)" fill="#8a969a" />
                <ellipse cx="1471" cy="645" rx="15" ry="6" transform="rotate(-71 1471 645)" fill="#b9c7cb" />
                <path d="M1504 662l12-6-1 11-12 6zM1496 675l3-5-1 9z" fill="#4f595c" />
            </g>
            <path d="M1428 543L1407 865" stroke="#006d6b" strokeWidth="2" />

            <g fill="none" stroke="#006d6b" strokeWidth="2" strokeDasharray="23 10">
                <path d="M754 205L738 871L1644 885L1661 210L1280 205" />
                <path d="M892 286L1520 494L1492 790L864 583z" />
                <path d="M1003 438L730 646L1358 854L1632 647z" />
                <path d="M1602 373L1572 669L1300 876L1327 580z" />
            </g>

            {/* datum coordinate system */}
            <g fill="none" stroke="#b35c5c" strokeWidth="1.200">
                <path d="M1462 510L1468 440M1462 510L1395 487M1462 510L1503 480M1427 461L1425 497L1446 483L1483 494L1485 458L1466 473zM1454 510H1468M1462 503V516" />
                <path d="M1468 436l4 14h-8zM1391 486l14 1-3 6zM1504 480l-9 9-4-5z" fill="#9c3f42" />
            </g>
            <g fontSize="12">
                <text x="1464" y="436" fill="#b35c5c">Z</text>
                <text x="1502" y="482" fill="#b35c5c">X</text>
                <text x="1379" y="488" fill="#dfe5e6">Y</text>
            </g>

            {/* datum targets */}
            <g fill="none" stroke="#111" strokeWidth="1">
                {ROUND_TARGETS.map((t) => (
                    <g key={t.id}>
                        <ellipse cx={t.x} cy={t.y} rx="19" ry="21" transform={`rotate(-25 ${t.x} ${t.y})`} />
                        <path d={t.leader} />
                        <text x={t.x - 6} y={t.y + 15} fontSize="15" fill="#111" stroke="none" transform={`rotate(14 ${t.x} ${t.y})`}>{t.id}</text>
                    </g>
                ))}
                {SIDE_TARGETS.map((t) => (
                    <g key={t.id}>
                        <ellipse cx={t.x} cy={t.y} rx="22" ry="9" transform={`rotate(-73 ${t.x} ${t.y})`} />
                        <path d={t.leader} />
                        <text x={t.x - 7} y={t.y + 16} fontSize="10" fill="#111" stroke="none" transform={`rotate(-25 ${t.x} ${t.y + 12})`}>{t.id}</text>
                    </g>
                ))}
                <path d="M977 738L1193 649M1240 652L1371 804L1382 808M1377 738L1441 790L1449 793" />
                <path d="M1193 649l-6 0 2 5zM1240 652l2 6 4-3zM1377 738l6 2-3 4z" fill="#111" />
                <path d="M1113 337L1088 388M1083 403l12-27M1083 382l11 13M1250 664L1279 697M1507 437L1490 473M1478 442L1499 466M1452 541l-8-13M1452 541l-10 7M993 353l-10 8M993 353l9 14M967 482l7-14" stroke="#d6dcdd" strokeWidth="1.400" />
                {CROSSES.map(([x, y]) => (
                    <g key={`${x}-${y}`}>
                        <path d={`M${x - 7} ${y}h14M${x} ${y - 6}v12`} stroke="#2a5fc0" strokeWidth="1.500" />
                        <path d={`M${x} ${y}l9-5`} />
                    </g>
                ))}
                <path d="M1378 714L1376 762" stroke="#1a5fb0" strokeWidth="1.500" />
            </g>

            {/* dimensions and feature control frames */}
            <g fill="none" stroke="#111">
                <path d="M818 704L964 747L963 768L817 725zM847 713V734M906 730V751M925 736V757M944 741V762" />
                <circle cx="833" cy="719" r="4.500" />
                <path d="M826 717l14 4M833 711v16" />
                <circle cx="893" cy="737" r="7.500" />
                <path d="M1451 785L1575 821L1573 841L1449 805zM1480 794V814M1517 804V825M1536 810V830M1555 815V836M1457 801Q1461 786 1474 806" />
            </g>
            <g fontSize="15" fill="#111">
                <text x="862" y="709" transform="rotate(16 862 709)">2X</text>
                <text x="887" y="717" transform="rotate(16 887 717)">∅100</text>
                <text x="932" y="729" fontSize="14" transform="rotate(16 932 729)">±0.15</text>
                <text x="852" y="730" transform="rotate(16 852 730)">∅1.5</text>
                <text x="888" y="740" fontSize="12" transform="rotate(16 888 740)">M</text>
                <text x="909" y="748" transform="rotate(16 909 748)">A</text>
                <text x="928" y="753" transform="rotate(16 928 753)">B</text>
                <text x="947" y="759" transform="rotate(16 947 759)">C</text>
                <text x="1382" y="813" transform="rotate(16 1382 813)">2X</text>
                <text x="1409" y="821" transform="rotate(16 1409 821)">∅52</text>
                <text x="1443" y="831" fontSize="14" transform="rotate(16 1443 831)">±0.15</text>
                <text x="1484" y="811" transform="rotate(16 1484 811)">0.25</text>
                <text x="1520" y="821" transform="rotate(16 1520 821)">A</text>
                <text x="1540" y="827" transform="rotate(16 1540 827)">B</text>
                <text x="1558" y="832" transform="rotate(16 1558 832)">C</text>
            </g>
            <g fill="none" stroke="#ef9a3c" strokeWidth="2.500">
                <path d="M1381 821L1515 859L1513 880L1379 842zM1411 830V851M1457 843V864M1476 848V869M1495 853V874" />
                <circle cx="1395" cy="835" r="4.500" strokeWidth="1" />
                <path d="M1388 833l14 4M1395 827v16" strokeWidth="1" />
                <circle cx="1443" cy="850" r="7.500" strokeWidth="1" />
            </g>
            <g fontSize="15" fill="#ef9a3c">
                <text x="1415" y="847" fontSize="14" transform="rotate(16 1415 847)">∅1</text>
                <text x="1440" y="853" fontSize="12" transform="rotate(16 1440 853)">L</text>
                <text x="1460" y="860" transform="rotate(16 1460 860)">A</text>
                <text x="1479" y="865" transform="rotate(16 1479 865)">B</text>
                <text x="1498" y="871" transform="rotate(16 1498 871)">C</text>
            </g>

            {/* work coordinate system */}
            <path d="M1392 716L1412 718L1436 731L1410 724z" fill="#7fcf8c" />
            <path d="M1392 716L1405 717L1404 722z" fill="#2d9a45" />
            <path d="M1438 733L1423 740L1415 751L1426 747z" fill="#e03232" />
            <path d="M1439 737L1434 768L1436 783L1440 768z" fill="#0b2fc0" />
            <g fontSize="14">
                <text x="1391" y="711" fill="#168a3a">YC</text>
                <text x="1414" y="766" fill="#e03232">XC</text>
                <text x="1440" y="794" fill="#2b55e8">ZC</text>
            </g>

            {/* view triad */}
            <g strokeLinejoin="round">
                <path d="M440 884L461 868L498 881L494 918L474 934L437 921z" fill="#e9eaeb" stroke="#b5b5b5" />
                <path d="M440 884L477 896L498 881M477 896L474 934" fill="none" stroke="#b5b5b5" />
                <path d="M439 890L419 883L420 880L403 880L416 890L418 887L438 894z" fill="#2f9a35" />
                <path d="M457 907L443 917L440 915L432 928L447 925L445 921L459 910z" fill="#d9333a" />
                <path d="M462 930L461 951H458L461 966L467 951H464L466 931z" fill="#0a33bd" />
            </g>
            <g fontSize="12">
                <text x="391" y="881" fill="#3c9a42">Y</text>
                <text x="423" y="936" fill="#d9333a">X</text>
                <text x="456" y="979" fill="#4a63e0">Z</text>
            </g>
        </svg>
    );
}

function Viewport() {
    return (
        <main className="flex flex-1 min-w-0 flex-col">
            <div className="flex h-[25px] shrink-0 bg-white border-b-2 border-b-[#005f87] box-content">
                <div className="flex w-[249px] items-center gap-[5px] bg-[#005f87] pl-[6px] text-[12px] text-white whitespace-nowrap">
                    <Bracket className="w-[16px] h-[16px]" />
                    <span>nist_ctc_02_asme1_nx1980_rc.prt</span>
                    <FilePen size={12} strokeWidth={2.5} />
                    <button aria-label="关闭文件"><X size={11} strokeWidth={4} className="text-[#c5d5dd]" /></button>
                </div>
            </div>
            <div className="relative flex-1 min-h-0 overflow-hidden bg-gradient-to-b from-[#b3b3b4] via-[#d2d3d4] to-[#e7e8e9] to-85%">
                <Model />
                <FeatureDialog />
                <div className="absolute left-[743px] top-[5px] flex w-[74px] h-[34px] items-center bg-white border-b border-[#ddd]">
                    <button aria-label="捕捉点" className="flex items-center gap-[6px] pl-[13px]">
                        <svg viewBox="0 0 22 22" className="w-[22px] h-[22px]" fill="none" stroke="#333" strokeWidth="1.300">
                            <circle cx="11" cy="11" r="9" />
                            <path d="M11 0v6M11 16v6M0 11h6M16 11h6M9 5l2 2 2-2M9 17l2-2 2 2M5 9l2 2-2 2M17 9l-2 2 2 2" />
                            <path d="M11 7.500l3.500 3.500-3.500 3.500L7.500 11z" fill="#ee7b11" stroke="none" />
                        </svg>
                        <Caret className="scale-75" />
                    </button>
                    <div className="w-px h-[26px] ml-[10px] bg-[#ddd]" />
                    <Caret className="ml-[3px] mt-[14px] scale-75" />
                </div>
            </div>
        </main>
    );
}

function InputMethodBar() {
    return (
        <div className="absolute right-[72px] bottom-0 flex w-[201px] h-[25px] items-center gap-[9px] border-t border-r border-[#b9cdea] bg-white text-[#0a6cd6]">
            <span className="flex w-[28px] h-[27px] shrink-0 items-center justify-center bg-[#f4511e] rounded-[5px] -rotate-12 text-white text-[24px] leading-none font-extrabold">S</span>
            <span className="text-[14px] leading-none font-bold">英</span>
            <span className="text-[14px] leading-none font-extrabold">•,</span>
            <Mic size={15} strokeWidth={2.5} className="shrink-0" />
            <Keyboard size={16} strokeWidth={2.5} className="shrink-0" />
            <Shirt size={15} fill="#a678f0" className="shrink-0 text-[#c16be0]" />
            <Gamepad2 size={16} strokeWidth={2.5} className="shrink-0" />
            <svg viewBox="0 0 14 14" className="w-[14px] h-[14px] shrink-0" fill="#0a6cd6">
                <path d="M0 0h6v6H0zM0 8h6v6H0zM8 8h6v6H8z" />
                <circle cx="11" cy="3" r="3" />
            </svg>
        </div>
    );
}

export default function App() {
    return (
        <div className="relative flex h-screen flex-col overflow-hidden bg-white text-[#111] font-['Open_Sans','Noto_Sans_CJK_SC',sans-serif]">
            <TitleBar />
            <Ribbon />
            <SelectionBar />
            <div className="flex flex-1 min-h-0 border-b border-[#a0a0a0]">
                <IconStrip />
                <Navigator />
                <Viewport />
            </div>
            <footer className="h-[20px] shrink-0 bg-white" />
            <InputMethodBar />
            <div className="absolute right-[5px] bottom-[12px] text-[37px] leading-[46px] font-light text-[#ececec] [text-shadow:1px_1px_1px_#777] pointer-events-none">
                CSDN @山涧果子
            </div>
        </div>
    );
}
